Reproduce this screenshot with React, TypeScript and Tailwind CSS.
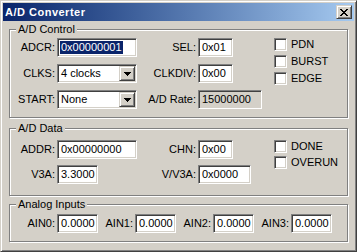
import React from 'react';

const sunken =
  'border border-t-[#808080] border-l-[#808080] border-r-white border-b-white shadow-[inset_1px_1px_0_#404040,inset_-1px_-1px_0_#d4d0c8]';
const raised =
  'border border-t-[#d4d0c8] border-l-[#d4d0c8] border-r-[#404040] border-b-[#404040] shadow-[inset_1px_1px_0_#ffffff,inset_-1px_-1px_0_#808080] bg-[#d4d0c8]';

interface EditProps {
  value: string;
  className: string;
  readOnly?: boolean;
  selected?: boolean;
}

const Edit: React.FC<EditProps> = ({ value, className, readOnly, selected }) => (
  <div
    className={`${sunken} ${className} h-[19px] flex items-center pl-[2px] shrink-0 overflow-hidden whitespace-nowrap ${
      readOnly ? 'bg-[#d4d0c8]' : 'bg-white'
    }`}
  >
    {selected ? (
      <span className="bg-[#0a246a] text-white leading-[13px] px-[1px]">{value}</span>
    ) : (
      <span className="pl-[1px]">{value}</span>
    )}
  </div>
);

const Combo: React.FC<{ value: string }> = ({ value }) => (
  <div className={`${sunken} ml-[2px] w-[80px] h-[19px] p-[1px] flex bg-white shrink-0`}>
    <span className="flex-1 flex items-center pl-[2px] whitespace-nowrap">{value}</span>
    <div className={`${raised} w-[16px] h-full flex items-center justify-center`}>
      <svg width="7" height="4" viewBox="0 0 7 4" shapeRendering="crispEdges">
        <rect x="0" y="0" width="7" height="1" fill="#000" />
        <rect x="1" y="1" width="5" height="1" fill="#000" />
        <rect x="2" y="2" width="3" height="1" fill="#000" />
        <rect x="3" y="3" width="1" height="1" fill="#000" />
      </svg>
    </div>
  </div>
);

const Check: React.FC<{ label: string }> = ({ label }) => (
  <div className="flex items-center h-[13px]">
    <div className={`${sunken} w-[13px] h-[13px] bg-white shrink-0`} />
    <span className="ml-[4px]">{label}</span>
  </div>
);

const Group: React.FC<{ title: string; className: string; children: React.ReactNode }> = ({
  title,
  className,
  children,
}) => (
  <fieldset
    className={`ml-[6px] w-[339px] border border-[#808080] shadow-[inset_1px_1px_0_#ffffff,1px_1px_0_#ffffff] px-0 ${className}`}
  >
    <legend className="ml-[6px] px-[2px] leading-[13px] bg-[#d4d0c8]">{title}</legend>
    {children}
  </fieldset>
);

const Label: React.FC<{ className: string; children: React.ReactNode }> = ({ className, children }) => (
  <span className={`${className} text-right shrink-0 whitespace-nowrap`}>{children}</span>
);

export default function App() {
  return (
    <div className="w-[357px] h-[252px] bg-[#d4d0c8] border border-t-[#d4d0c8] border-l-[#d4d0c8] border-r-[#404040] border-b-[#404040] shadow-[inset_1px_1px_0_#ffffff,inset_-1px_-1px_0_#808080] p-[2px] flex flex-col font-['Liberation_Sans',Arial,sans-serif] text-[11px] leading-[13px] text-black">
      {/* title bar */}
      <div className="h-[18px] shrink-0 bg-linear-to-r from-[#0a246a] to-[#a6caf0] flex items-center justify-between pl-[2px] pr-[2px]">
        <span className="text-white font-bold tracking-[0.5px]">A/D Converter</span>
        <div className={`${raised} w-[16px] h-[14px] flex items-center justify-center`}>
          <svg width="8" height="7" viewBox="0 0 8 7" shapeRendering="crispEdges">
            <rect x="0" y="0" width="2" height="1" fill="#000" />
            <rect x="6" y="0" width="2" height="1" fill="#000" />
            <rect x="1" y="1" width="2" height="1" fill="#000" />
            <rect x="5" y="1" width="2" height="1" fill="#000" />
            <rect x="2" y="2" width="4" height="1" fill="#000" />
            <rect x="3" y="3" width="2" height="1" fill="#000" />
            <rect x="2" y="4" width="4" height="1" fill="#000" />
            <rect x="1" y="5" width="2" height="1" fill="#000" />
            <rect x="5" y="5" width="2" height="1" fill="#000" />
            <rect x="0" y="6" width="2" height="1" fill="#000" />
            <rect x="6" y="6" width="2" height="1" fill="#000" />
          </svg>
        </div>
      </div>

      {/* A/D Control */}
      <Group title="A/D Control" className="mt-[2px] pt-[2px] pb-[8px]">
        <div className="flex">
          <div className="w-[264px] shrink-0 flex flex-col gap-[7px]">
            <div className="flex items-center">
              <Label className="w-[45px]">ADCR:</Label>
              <Edit value="0x00000001" className="ml-[2px] w-[80px]" selected />
              <Label className="w-[59px]">SEL:</Label>
              <Edit value="0x01" className="ml-[2px] w-[35px]" />
            </div>
            <div className="flex items-center">
              <Label className="w-[45px]">CLKS:</Label>
              <Combo value="4 clocks" />
              <Label className="w-[59px]">CLKDIV:</Label>
              <Edit value="0x00" className="ml-[2px] w-[35px]" />
            </div>
            <div className="flex items-center">
              <Label className="w-[45px]">START:</Label>
              <Combo value="None" />
              <Label className="w-[59px]">A/D Rate:</Label>
              <Edit value="15000000" className="ml-[2px] w-[64px]" readOnly />
            </div>
          </div>
          <div className="flex flex-col gap-[4px]">
            <Check label="PDN" />
            <Check label="BURST" />
            <Check label="EDGE" />
          </div>
        </div>
      </Group>

      {/* A/D Data */}
      <Group title="A/D Data" className="mt-[4px] pt-[5px] pb-[11px]">
        <div className="flex">
          <div className="w-[264px] shrink-0 flex flex-col gap-[6px]">
            <div className="flex items-center">
              <Label className="w-[45px]">ADDR:</Label>
              <Edit value="0x00000000" className="ml-[2px] w-[80px]" />
              <Label className="w-[59px]">CHN:</Label>
              <Edit value="0x00" className="ml-[2px] w-[35px]" />
            </div>
            <div className="flex items-center">
              <Label className="w-[45px]">V3A:</Label>
              <Edit value="3.3000" className="ml-[2px] w-[41px]" />
              <Label className="w-[98px]">V/V3A:</Label>
              <Edit value="0x0000" className="ml-[2px] w-[53px]" />
            </div>
          </div>
          <div className="flex flex-col gap-[3px]">
            <Check label="DONE" />
            <Check label="OVERUN" />
          </div>
        </div>
      </Group>

      {/* Analog Inputs */}
      <Group title="Analog Inputs" className="mt-[2px] pt-[3px] pb-[8px]">
        <div className="flex items-center pl-[16px] gap-[6px]">
          {['AIN0:', 'AIN1:', 'AIN2:', 'AIN3:'].map((name) => (
            <div key={name} className="flex items-center">
              <Label className="w-[29px]">{name}</Label>
              <Edit value="0.0000" className="ml-[2px] w-[41px]" />
            </div>
          ))}
        </div>
      </Group>
    </div>
  );
}
